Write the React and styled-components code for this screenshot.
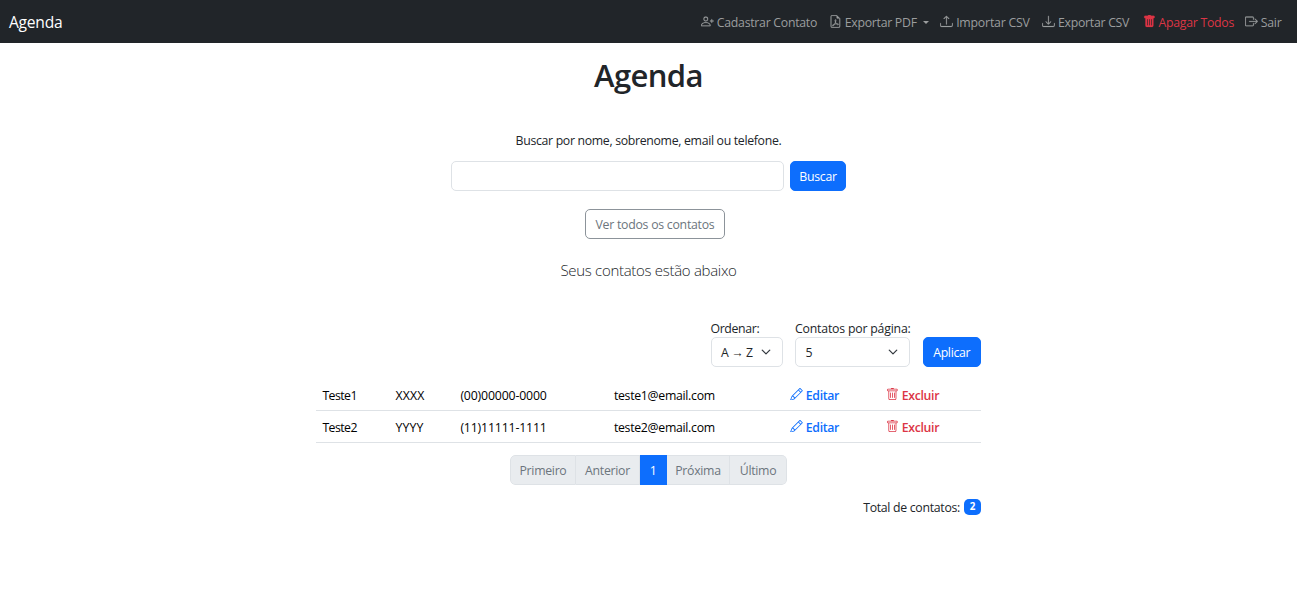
import React from "react";
import styled, { createGlobalStyle } from "styled-components";
import {
  BsPersonPlus, BsFileEarmarkPdf, BsUpload, BsDownload, BsTrashFill,
  BsBoxArrowRight, BsPencil, BsTrash,
} from "react-icons/bs";

const Global = createGlobalStyle`
  *, *::before, *::after { box-sizing: border-box; }
  body {
    margin: 0;
    background: #fff;
    color: #212529;
    font: 400 12.3px/19px "Open Sans", "Noto Sans", sans-serif;
    letter-spacing: -0.3px;
  }
  h1, p { margin: 0; }
  button, input, select { font: inherit; color: inherit; letter-spacing: inherit; }
`;

const Navbar = styled.nav`
  display: flex;
  align-items: center;
  justify-content: space-between;
  height: 43px;
  padding: 1px 15px 0 9px;
  background: #212529;
`;
const Brand = styled.a`
  color: #fff;
  font-size: 15.6px;
  line-height: 24px;
  letter-spacing: -0.25px;
`;
const NavList = styled.div`
  display: flex;
  gap: 12.4px;
`;
const NavLink = styled.a`
  display: flex;
  align-items: center;
  gap: 3px;
  width: ${(p) => p.$width}px;
  white-space: nowrap;
  letter-spacing: ${(p) => p.$spacing || -0.28}px;
  color: ${(p) => (p.$danger ? "#dc3545" : "#9b9d9e")};
  svg {
    flex: none;
    width: 12.8px;
    height: 12.8px;
    margin-top: -1px;
    stroke: currentColor;
    stroke-width: 0.25;
  }
`;
const Caret = styled.span`
  margin-left: 3px;
  border: 3.7px solid transparent;
  border-top-color: currentColor;
  border-bottom: 0;
`;
const Page = styled.main`
  display: flex;
  flex-direction: column;
  align-items: center;
`;
const Title = styled.h1`
  margin-top: 13px;
  font-size: 31px;
  font-weight: 600;
  line-height: 38px;
  letter-spacing: -0.6px;
`;
const Hint = styled.p`
  margin-top: 37px;
  letter-spacing: -0.32px;
`;
const SearchForm = styled.form`
  display: flex;
  gap: 6px;
  margin-top: 11px;
`;
const SearchInput = styled.input`
  width: 333px;
  height: 30px;
  border: 1px solid #dee2e6;
  border-radius: 5px;
  padding: 0 9px;
`;
const Button = styled.button`
  display: flex;
  align-items: center;
  justify-content: center;
  width: ${(p) => p.$width}px;
  height: 30px;
  padding: 0;
  white-space: nowrap;
  border: 1px solid ${(p) => (p.$outline ? "#8c939a" : "#0d6efd")};
  border-radius: 5px;
  background: ${(p) => (p.$outline ? "#fff" : "#0d6efd")};
  color: ${(p) => (p.$outline ? "#6c757d" : "#fff")};
`;
const ShowAll = styled.div`
  margin-top: 18px;
  padding-left: 13px;
  letter-spacing: -0.26px;
`;
const Lead = styled.p`
  margin-top: 20px;
  font-size: 15px;
  font-weight: 300;
  line-height: 23px;
`;
const Content = styled.section`
  width: 665px;
  margin-top: 37px;
`;
const Filters = styled.div`
  display: flex;
  justify-content: flex-end;
  align-items: flex-end;
  gap: 12.5px;
`;
const Field = styled.label`
  display: flex;
  flex-direction: column;
  width: ${(p) => p.$width}px;
  white-space: nowrap;
  letter-spacing: ${(p) => p.$spacing}px;
`;
const SelectBox = styled.span`
  display: flex;
  align-items: center;
  justify-content: space-between;
  height: 30px;
  margin-top: -1px;
  padding: 0 11px 0 9.5px;
  border: 1px solid #dee2e6;
  border-radius: 5px;
  svg { width: 10px; height: 10px; }
`;
const Table = styled.div`
  margin-top: 12px;
`;
const Row = styled.div`
  display: grid;
  grid-template-columns: 73px 65px 153.5px 176px 96px 1fr;
  height: 32px;
  padding-top: 1px;
  align-items: center;
  border-bottom: 1px solid #dee2e6;
  color: #000;
`;
const Cell = styled.span`
  padding-left: 6.4px;
  letter-spacing: ${(p) => p.$spacing}px;
`;
const Action = styled.a`
  display: flex;
  align-items: center;
  gap: 3px;
  padding-left: 6.5px;
  font-weight: 600;
  letter-spacing: -0.34px;
  color: ${(p) => (p.$danger ? "#dc3545" : "#0d6efd")};
  svg { width: 12.8px; height: 12.8px; margin-top: -2px; }
`;
const Pagination = styled.div`
  display: flex;
  width: 277px;
  height: 30px;
  margin: 12px auto 0;
  border-radius: 5px;
  overflow: hidden;
`;
const PageItem = styled.span`
  display: flex;
  align-items: center;
  justify-content: center;
  width: ${(p) => p.$width}px;
  height: 30px;
  flex: none;
  border: 1px solid ${(p) => (p.$active ? "#0d6efd" : "#dee2e6")};
  border-left-width: 0;
  background: ${(p) => (p.$active ? "#0d6efd" : "#e9ecef")};
  color: ${(p) => (p.$active ? "#fff" : "#6c757d")};
  &:first-child { border-left-width: 1px; border-radius: 5px 0 0 5px; }
  &:last-child { border-radius: 0 5px 5px 0; }
`;
const Total = styled.p`
  display: flex;
  justify-content: flex-end;
  align-items: center;
  gap: 4px;
  margin-top: 13px;
`;
const Badge = styled.span`
  width: 17px;
  height: 16px;
  margin-top: -1px;
  border-radius: 5px;
  background: #0d6efd;
  color: #fff;
  font-size: 9.8px;
  font-weight: 700;
  line-height: 16px;
  text-align: center;
`;

const Chevron = () => (
  <svg viewBox="0 0 16 16" fill="none" stroke="#343a40" strokeWidth="2" strokeLinecap="round" strokeLinejoin="round">
    <path d="m2 5 6 6 6-6" />
  </svg>
);

const contacts = [
  ["Teste1", "XXXX", "(00)00000-0000", "teste1@email.com"],
  ["Teste2", "YYYY", "(11)11111-1111", "teste2@email.com"],
];
const columnSpacing = [-0.55, 0.2, -0.16, -0.3];

export default function App() {
  return (
    <>
      <Global />
      <Navbar>
        <Brand>Agenda</Brand>
        <NavList>
          <NavLink $width={115.5}><BsPersonPlus /><span>Cadastrar Contato</span></NavLink>
          <NavLink $width={99}><BsFileEarmarkPdf /><span>Exportar PDF</span><Caret /></NavLink>
          <NavLink $width={89.5} $spacing={-0.2}><BsUpload /><span>Importar CSV</span></NavLink>
          <NavLink $width={88}><BsDownload /><span>Exportar CSV</span></NavLink>
          <NavLink $width={90} $spacing={-0.27} $danger><BsTrashFill /><span>Apagar Todos</span></NavLink>
          <NavLink $width={37}><BsBoxArrowRight /><span>Sair</span></NavLink>
        </NavList>
      </Navbar>
      <Page>
        <Title>Agenda</Title>
        <Hint>Buscar por nome, sobrenome, email ou telefone.</Hint>
        <SearchForm>
          <SearchInput aria-label="Buscar" />
          <Button type="button" $width={56}>Buscar</Button>
        </SearchForm>
        <ShowAll>
          <Button $outline $width={140}>Ver todos os contatos</Button>
        </ShowAll>
        <Lead>Seus contatos estão abaixo</Lead>
        <Content>
          <Filters>
            <Field $width={72} $spacing={-0.36}>Ordenar:<SelectBox>A → Z<Chevron /></SelectBox></Field>
            <Field $width={115} $spacing={-0.2}>Contatos por página:<SelectBox>5<Chevron /></SelectBox></Field>
            <Button $width={58.5}>Aplicar</Button>
          </Filters>
          <Table>
            {contacts.map((contact) => (
              <Row key={contact[0]}>
                {contact.map((value, i) => <Cell key={value} $spacing={columnSpacing[i]}>{value}</Cell>)}
                <Action><BsPencil />Editar</Action>
                <Action $danger><BsTrash />Excluir</Action>
              </Row>
            ))}
          </Table>
          <Pagination>
            <PageItem $width={66}>Primeiro</PageItem>
            <PageItem $width={64}>Anterior</PageItem>
            <PageItem $width={27} $active>1</PageItem>
            <PageItem $width={63}>Próxima</PageItem>
            <PageItem $width={57}>Último</PageItem>
          </Pagination>
          <Total>Total de contatos: <Badge>2</Badge></Total>
        </Content>
      </Page>
    </>
  );
}
